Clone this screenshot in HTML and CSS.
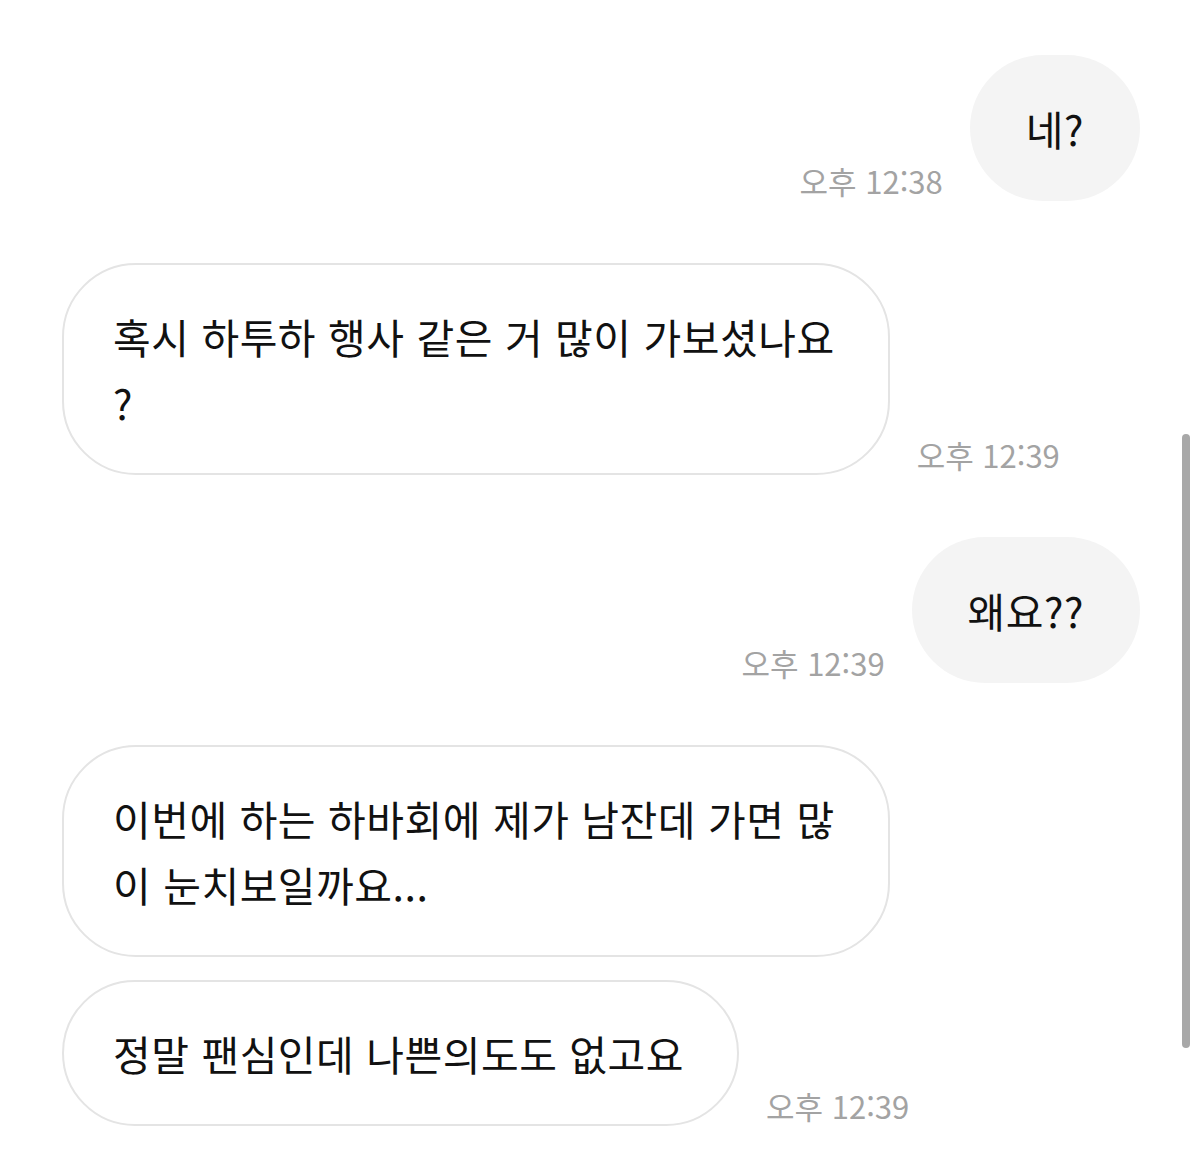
FILE: index.html
```html
<!DOCTYPE html>
<html lang="ko">
<head>
    <meta charset="UTF-8">
    <meta name="viewport" content="width=device-width, initial-scale=1.0">
    <title>채팅</title>
    <link rel="stylesheet" href="styles.css">
</head>
<body>
    <div class="chat">
        <div class="row mine">
            <span class="time">오후 12:38</span>
            <div class="bubble">네?</div>
        </div>

        <div class="row theirs">
            <div class="bubble">혹시 하투하 행사 같은 거 많이 가보셨나요<br>?</div>
            <span class="time">오후 12:39</span>
        </div>

        <div class="row mine">
            <span class="time">오후 12:39</span>
            <div class="bubble">왜요??</div>
        </div>

        <div class="row theirs">
            <div class="bubble">이번에 하는 하바회에 제가 남잔데 가면 많<br>이 눈치보일까요...</div>
        </div>

        <div class="row theirs next">
            <div class="bubble">정말 팬심인데 나쁜의도도 없고요</div>
            <span class="time">오후 12:39</span>
        </div>
    </div>

    <div class="scrollbar"></div>
</body>
</html>
```

FILE: styles.css
```css
* {
    margin: 0;
    padding: 0;
    box-sizing: border-box;
}

body {
    background: #fff;
    font-family: "Noto Sans CJK KR", "Noto Sans", sans-serif;
    color: #111;
    min-height: 100vh;
    overflow: hidden;
}

.chat {
    display: flex;
    flex-direction: column;
    padding: 55px 60px 0 62px;
}

.row {
    display: flex;
    align-items: flex-end;
    gap: 27px;
    margin-top: 62px;
}

.row:first-child {
    margin-top: 0;
}

.row.next {
    margin-top: 23px;
}

.mine {
    justify-content: flex-end;
}

.theirs {
    justify-content: flex-start;
}

.bubble {
    font-size: 41px;
    line-height: 66px;
    letter-spacing: 0.5px;
    border-radius: 74px;
    white-space: nowrap;
}

.mine .bubble {
    background: #f4f4f4;
    padding: 40px 56px;
}

.theirs .bubble {
    background: #fff;
    border: 2px solid #e4e4e4;
    padding: 38px 53px 38px 49px;
}

.time {
    font-size: 31px;
    line-height: 36px;
    color: #a3a3a3;
    margin-bottom: 2px;
    white-space: nowrap;
}

.scrollbar {
    position: absolute;
    top: 434px;
    left: 1182px;
    width: 8px;
    height: 614px;
    border-radius: 4px;
    background: #a8a8a8;
}
```
